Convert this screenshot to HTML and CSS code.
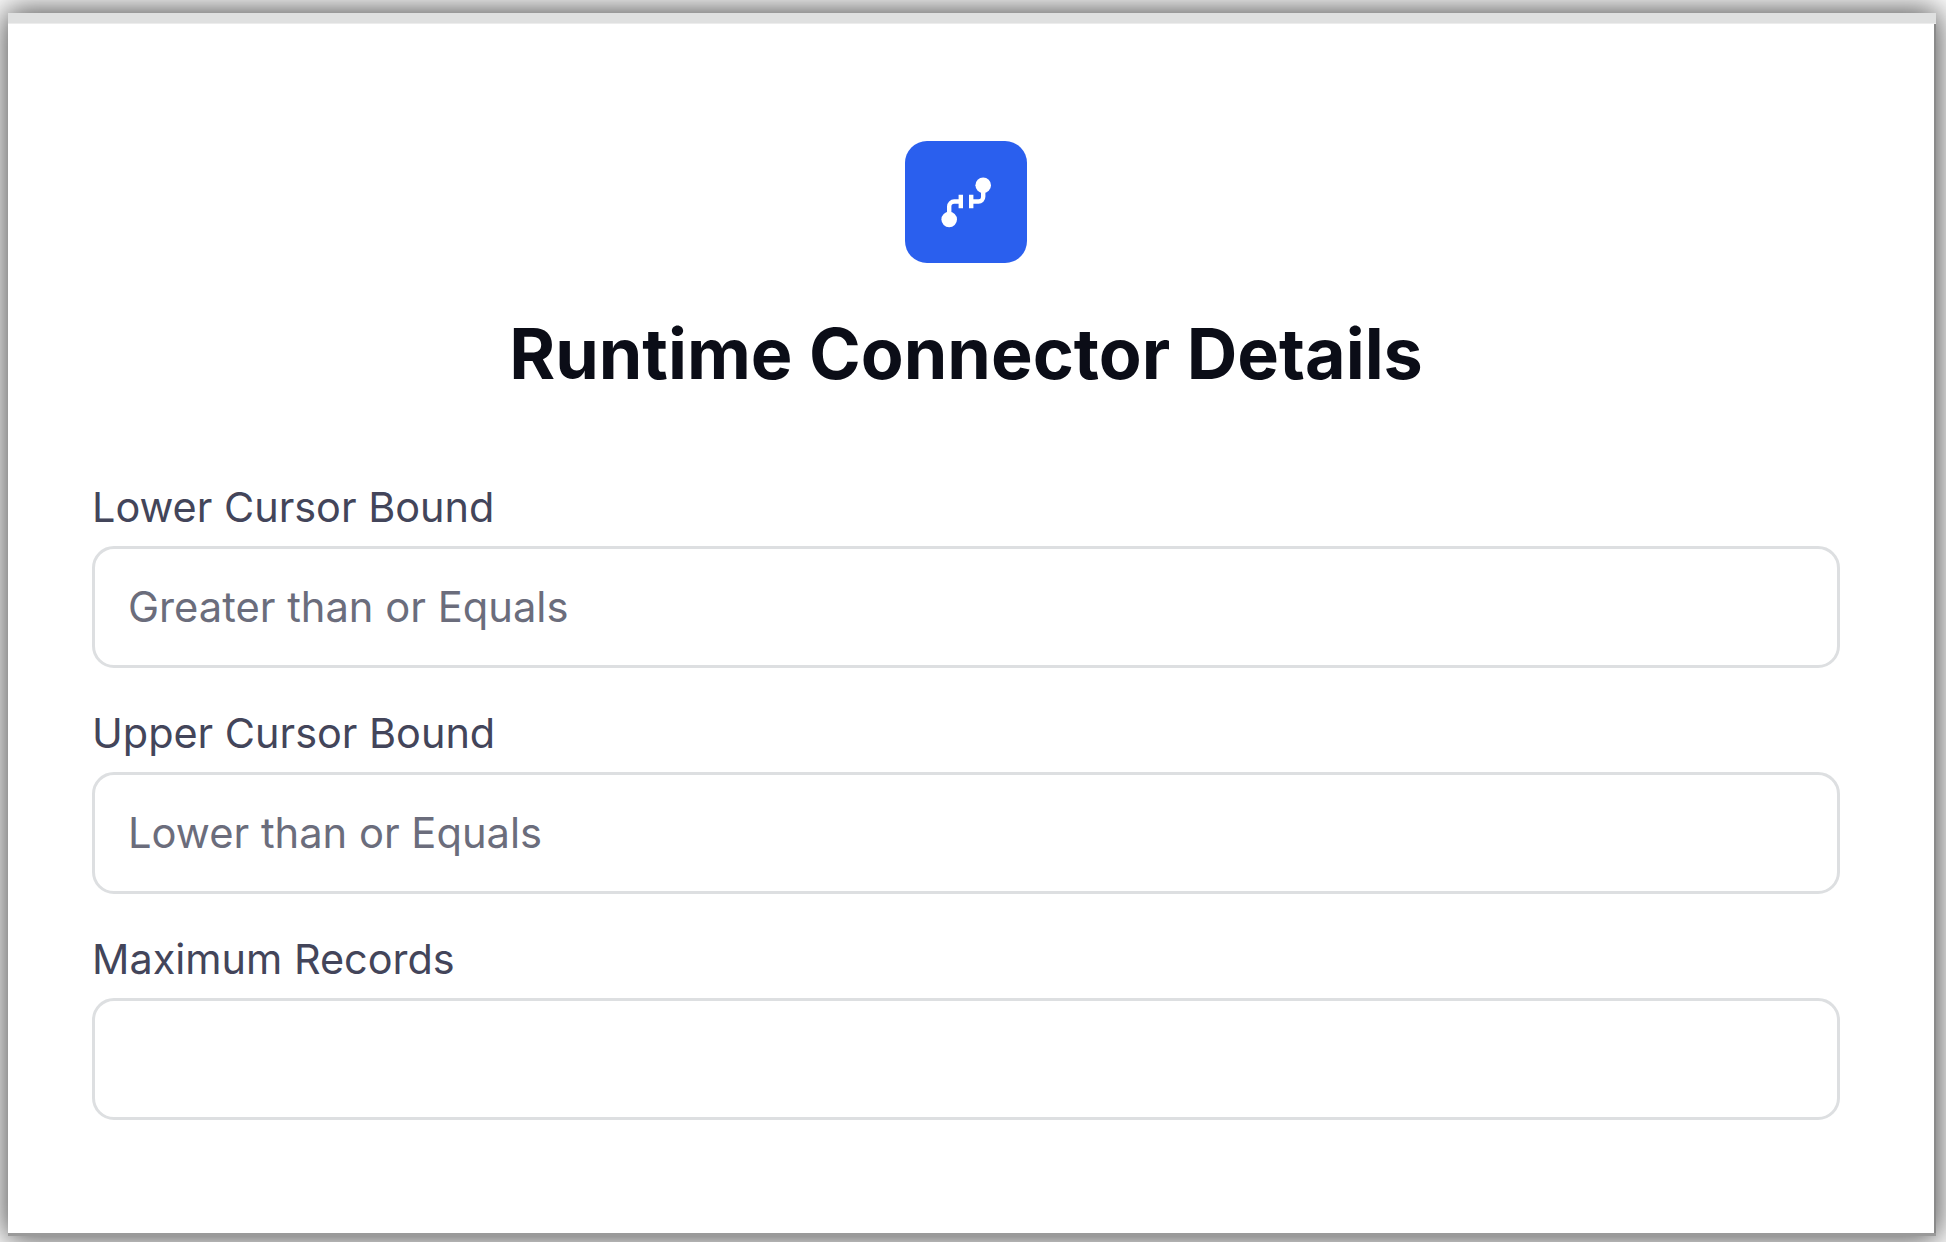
FILE: index.html
```html
<!DOCTYPE html>
<html lang="en">
<head>
<meta charset="utf-8">
<title>Runtime Connector Details</title>
<link rel="stylesheet" href="styles.css">
</head>
<body>
<main class="window">
  <div class="window-bar"></div>
  <div class="content">
    <div class="logo">
      <svg class="logo-glyph" viewBox="0.5 2.5 60 60" aria-hidden="true">
        <circle cx="47.7" cy="15.7" r="7.8" fill="#fff"/>
        <circle cx="13.7" cy="50" r="7.8" fill="#fff"/>
        <path d="M13.7 46V37a5 5 0 0 1 5-5H25M25.3 25.2V38.8M35.7 25.2V38.8M35.7 32H43a4.7 4.7 0 0 0 4.7-4.7V18" fill="none" stroke="#fff" stroke-width="4.4"/>
      </svg>
    </div>
    <h1 class="title">Runtime Connector Details</h1>
    <form class="form">
      <label class="field"><span class="field-label">Lower Cursor Bound</span><input class="field-input" type="text" placeholder="Greater than or Equals"></label>
      <label class="field"><span class="field-label">Upper Cursor Bound</span><input class="field-input" type="text" placeholder="Lower than or Equals"></label>
      <label class="field"><span class="field-label">Maximum Records</span><input class="field-input" type="text"></label>
    </form>
  </div>
</main>
</body>
</html>
```
FILE: styles.css
```css
* { box-sizing: border-box; }
html, body { height: 100%; }
body {
  margin: 0;
  padding: 13px 10px 6px 8px;
  background: #fff;
  font-family: Inter, "Liberation Sans", sans-serif;
  overflow: hidden;
}
.window {
  height: 100%;
  background: #fff;
  display: flex;
  flex-direction: column;
  border-bottom: 3px solid #9a9a9a;
  box-shadow: 0 0 30px 3px rgba(0, 0, 0, 0.7);
}
.window-bar {
  height: 11px;
  background: #dfe0e0;
  border-bottom: 1px solid #ececec;
  flex: none;
}
.content {
  flex: 1;
  display: flex;
  flex-direction: column;
  align-items: center;
  padding: 117px 94px 0 84px;
  border-right: 2px solid #8a8a8a;
}
.logo {
  width: 122px;
  height: 122px;
  border-radius: 22px;
  background: #2a5fee;
  display: flex;
  align-items: center;
  justify-content: center;
}
.logo-glyph { width: 60px; height: 60px; }
.title {
  margin: 47px 0 0;
  font-size: 70px;
  line-height: 88px;
  font-weight: 700;
  color: #0b0d17;
}
.form {
  width: 100%;
  margin-top: 85px;
  display: flex;
  flex-direction: column;
  gap: 41px;
}
.field { display: flex; flex-direction: column; gap: 15px; }
.field-label {
  font-size: 41.4px;
  line-height: 48px;
  color: #43455a;
}
.field-input {
  height: 122px;
  width: 100%;
  border: 3px solid #dddfe1;
  border-radius: 22px;
  padding: 0 33px;
  background: #fff;
  font: 400 41.7px Inter, "Liberation Sans", sans-serif;
  outline: none;
}
.field-input::placeholder { color: #6b6d7c; opacity: 1; }
```
